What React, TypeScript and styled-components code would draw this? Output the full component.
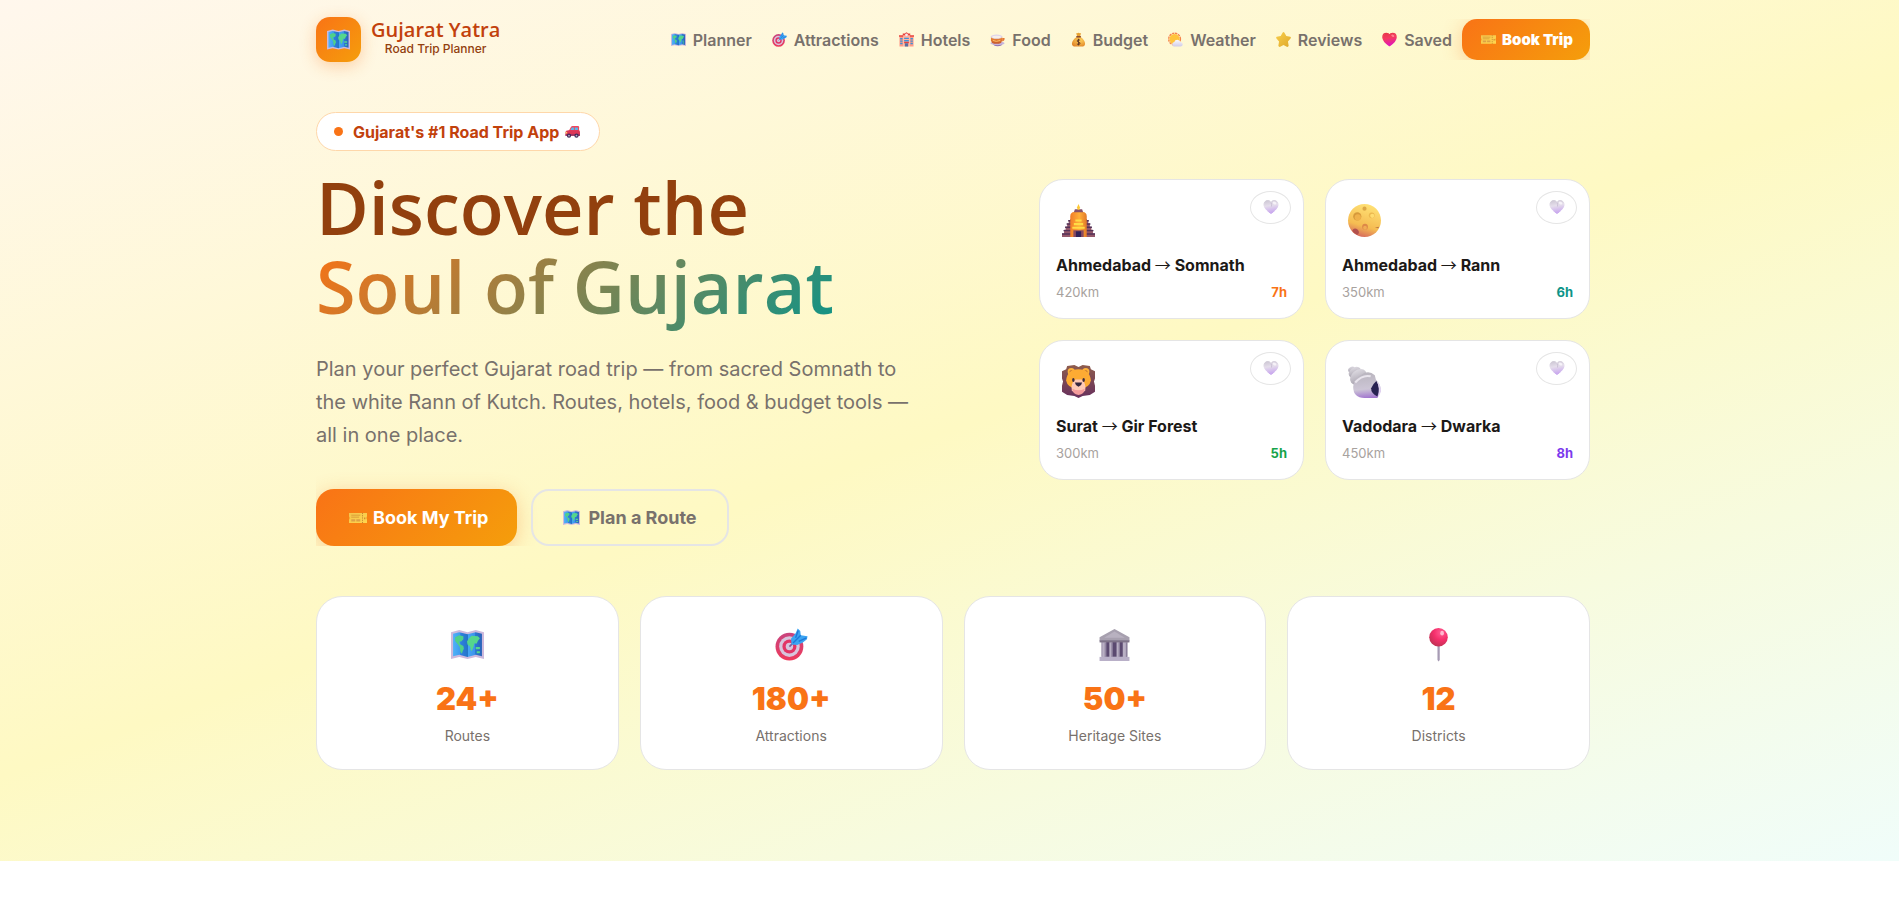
import React, { useId, useState } from "react";
import styled, { createGlobalStyle } from "styled-components";

const sans = `Inter, "Open Sans", "Liberation Sans", sans-serif`;
const display = `"Open Sans", Lato, sans-serif`;

const GlobalStyle = createGlobalStyle`
  *, *::before, *::after { box-sizing: border-box; }
  body { margin: 0; background: #fff; color: #1c1917; font-family: ${sans}; }
  h1, p, dl, dd, dt, ul { margin: 0; padding: 0; }
  button { font-family: inherit; cursor: pointer; }
`;

/* ---------- Icons ---------- */

type IconName =
  | "map" | "target" | "hotel" | "food" | "money" | "weather" | "star" | "heart"
  | "ticket" | "car" | "temple" | "moon" | "lion" | "shell" | "paleHeart" | "museum" | "pin";

const HEART = "M16 29C11 25.500 2 19 2 11C2 6 5.500 3 9.500 3C12.500 3 14.800 4.600 16 7C17.200 4.600 19.500 3 22.500 3C26.500 3 30 6 30 11C30 19 21 25.500 16 29Z";

const drawings: Record<IconName, (id: string) => React.ReactNode> = {
  map: (id) => (
    <>
      <defs>
        <linearGradient id={id} x1="0" x2="1">
          <stop offset="0" stopColor="#4fb3f7" /><stop offset=".25" stopColor="#3f9bf0" />
          <stop offset=".26" stopColor="#2f7fe0" /><stop offset=".5" stopColor="#2476c8" />
          <stop offset=".51" stopColor="#45a6f5" /><stop offset=".75" stopColor="#3c93ea" />
          <stop offset=".76" stopColor="#2b7bd4" /><stop offset="1" stopColor="#2a62b8" />
        </linearGradient>
      </defs>
      <path d="M0 4L8 2L16 4L24 2L32 4V30L24 28L16 30L8 28L0 30Z" fill="#cdb9dc" />
      <path d="M2 5.500L8 4L16 6L24 4L30 5.500V27.500L24 26L16 28L8 26L2 27.500Z" fill={`url(#${id})`} />
      <path d="M4 9L8 7L12 8L12 11L10 13L8 13L8.500 15.500L12 17.500L12.500 20L11.500 22L10.500 25L9 23L8.500 18.500L6 15L4 12.500Z" fill="#4fd089" />
      <path d="M17.500 10L20 7.500L26 8L28 10L26 12.500L25 15L22.500 15L22 18L20.500 21.500L19.500 22.500L18.500 18L16 16L15.500 13Z" fill="#55d68c" />
      <path d="M24 18.500H28V20.500H24ZM25 22.500H28V24.500H25Z" fill="#55d68c" />
    </>
  ),
  target: (id) => (
    <>
      <defs>
        <linearGradient id={id} x1="0" y1="0" x2="0" y2="1">
          <stop offset="0" stopColor="#c8447e" /><stop offset="1" stopColor="#ee3a5c" />
        </linearGradient>
      </defs>
      <circle cx="14" cy="18" r="13.500" fill={`url(#${id})`} />
      <circle cx="14" cy="18" r="10" fill="#d8c5dc" />
      <circle cx="14" cy="18" r="6.800" fill="#e23566" />
      <circle cx="14" cy="18" r="3.600" fill="#d8c5dc" />
      <path d="M14 18L20 12" stroke="#7f5a9d" strokeWidth="1.600" />
      <path d="M15.500 10.500L20 5L22 .5L24.500 3L25 7L31.500 8L31 11L27 14L21.500 16.500L16 16Z" fill="#3ba4f2" />
      <path d="M17.500 14.500L25 7M20 9.500L22.500 2.500M23 13L30.500 9.500" stroke="#1f78d8" strokeWidth="1.300" fill="none" />
    </>
  ),
  hotel: () => (
    <>
      <path d="M1 9H9V31H1ZM23 9H31V31H23Z" fill="#ff9b87" />
      <path d="M9 5H23V31H9Z" fill="#ffb3a0" />
      <path d="M0 7H9V10H0ZM23 7H32V10H23ZM8 3H12L16 .5L20 3H24V7H8Z" fill="#e8413c" />
      <circle cx="16" cy="6" r="3" fill="#f5e6ef" />
      <path d="M2.500 13H7.500V16H2.500ZM2.500 18H7.500V21H2.500ZM2.500 23H7.500V26H2.500ZM24.500 13H29.500V16H24.500ZM24.500 18H29.500V21H24.500ZM24.500 23H29.500V26H24.500ZM11 12H21V15H11ZM11 17H21V20H11Z" fill="#3d93d8" />
      <path d="M11 21H21V24H11Z" fill="#e8413c" />
      <path d="M12.500 24H19.500V31H12.500Z" fill="#57719f" />
    </>
  ),
  food: (id) => (
    <>
      <defs>
        <linearGradient id={id} x1="0" y1="0" x2="0" y2="1">
          <stop offset="0" stopColor="#f59338" /><stop offset="1" stopColor="#c4572c" />
        </linearGradient>
      </defs>
      <path d="M5 24H28L24 29Q16 32 9 29Z" fill="#8a6aae" />
      <ellipse cx="16" cy="24" rx="15" ry="4" fill="#c6b5dc" />
      <path d="M2 10H26V18Q25 24 19 25H9Q3 24 2 18Z" fill={`url(#${id})`} />
      <path d="M26 13H31Q32 19 26 20Z" fill="#e47733" />
      <ellipse cx="14" cy="10" rx="12.500" ry="4.500" fill="#ded3ea" />
      <ellipse cx="14" cy="10.500" rx="9.500" ry="2.600" fill="#f6efe9" />
      <path d="M6 18Q13 22 22 18" stroke="#ffc46b" strokeWidth="2" fill="none" />
    </>
  ),
  money: (id) => (
    <>
      <defs>
        <radialGradient id={id} cx=".6" cy=".35" r=".8">
          <stop offset="0" stopColor="#ffd25c" /><stop offset="1" stopColor="#dd7c22" />
        </radialGradient>
      </defs>
      <path d="M11 2Q13.500 3 16 1.500Q18.500 3 21.500 2L19.500 9H13Z" fill="#e9a233" />
      <path d="M12.500 10Q2 17 2 25Q2 31 9 31H23Q30 31 30 25Q30 17 20 10Z" fill={`url(#${id})`} />
      <rect x="11" y="8.500" width="10.500" height="3" rx="1.500" fill="#8b4c2e" />
      <path d="M19.500 17.500Q16 15.500 13.500 17.500Q12 20.500 16 21.500Q20.500 22.500 19 25.500Q16 28 12.500 25.500M16 14.500V28.500" stroke="#613623" strokeWidth="2" fill="none" />
    </>
  ),
  weather: (id) => (
    <>
      <defs>
        <linearGradient id={id} x1="0" y1="0" x2="0" y2="1">
          <stop offset="0" stopColor="#fafaff" /><stop offset="1" stopColor="#d0cbe8" />
        </linearGradient>
      </defs>
      <circle cx="14" cy="15" r="12.500" fill="none" stroke="#f5834b" strokeWidth="3" strokeDasharray="5 1.500" />
      <circle cx="14" cy="15" r="11" fill="#ffc43d" />
      <path d="M15 31Q9 31 9 26Q9 22 13.500 21.500Q14.500 16.500 20 16.500Q25.500 17 26 21.500Q31.500 22 31.500 26.500Q31 31 26.500 31Z" fill={`url(#${id})`} />
    </>
  ),
  star: (id) => (
    <>
      <defs>
        <linearGradient id={id} x1="0" y1="0" x2="1" y2="1">
          <stop offset="0" stopColor="#f8ce4a" /><stop offset="1" stopColor="#dfa92c" />
        </linearGradient>
      </defs>
      <path d="M14 1.500Q16 -1 18 1.500L22 8.500L30.500 10Q33 11.500 31 14L25.500 20L27 29.500Q26 32.500 23 31.500L16 27.500L9 31.500Q6 32.500 5 29.500L6.500 20L1 14Q-1 11.500 1.500 10L10 8.500Z" fill={`url(#${id})`} />
    </>
  ),
  heart: (id) => (
    <>
      <defs>
        <linearGradient id={id} x1="0" y1="0" x2=".2" y2="1">
          <stop offset="0" stopColor="#e8364a" /><stop offset=".45" stopColor="#f53a60" /><stop offset="1" stopColor="#e318b4" />
        </linearGradient>
      </defs>
      <path d={HEART} fill={`url(#${id})`} stroke={`url(#${id})`} strokeWidth="3" strokeLinejoin="round" />
      <ellipse cx="23" cy="8" rx="3.500" ry="2.200" fill="#ff7e90" transform="rotate(25 23 8)" />
    </>
  ),
  paleHeart: (id) => (
    <>
      <defs>
        <linearGradient id={id} x1="0" y1="0" x2=".2" y2="1">
          <stop offset="0" stopColor="#cbc5d2" /><stop offset=".45" stopColor="#e5deeb" /><stop offset="1" stopColor="#c9a8ee" />
        </linearGradient>
      </defs>
      <path d={HEART} fill={`url(#${id})`} stroke={`url(#${id})`} strokeWidth="2" strokeLinejoin="round" />
      <path d="M16 7Q18 10 17 15" stroke="#c3b8cf" strokeWidth="1.500" fill="none" />
      <ellipse cx="23" cy="8" rx="4" ry="2.600" fill="#f6f2f8" transform="rotate(25 23 8)" />
    </>
  ),
  ticket: (id) => (
    <>
      <defs>
        <linearGradient id={id} x1="0" y1="0" x2="1" y2="1">
          <stop offset="0" stopColor="#f3c44c" /><stop offset="1" stopColor="#ffd64e" />
        </linearGradient>
      </defs>
      <path d="M0 7H32V13Q30 16 32 19V25H0V19Q2 16 0 13Z" fill={`url(#${id})`} />
      <path d="M4 11H20M4 14.500H18" stroke="#d89b38" strokeWidth="1.600" />
      <path d="M4 18H11V22H4ZM13 18H20V22H13Z" fill="#dda147" />
      <path d="M24 7V25" stroke="#b87831" strokeWidth="1.500" strokeDasharray="2 2" />
      <path d="M27 15H29V18H27Z" fill="#c4812e" />
    </>
  ),
  car: () => (
    <>
      <path d="M9 13L13 6Q14 4.500 16 4.500H28Q30 4.500 30 7V15H8Z" fill="#f0475e" />
      <path d="M11.500 13L14.500 7.500H19V13ZM21 7.500H27.500V13H21Z" fill="#58b8ee" />
      <path d="M1 18Q1 13.500 8 13.500H30Q32 14 32 18V25H1Z" fill="#dc3557" />
      <path d="M1 22H32V25H1Z" fill="#8f2f62" />
      <circle cx="3" cy="18.500" r="1.800" fill="#ffd067" />
      <circle cx="8.500" cy="25" r="4.500" fill="#3d2856" /><circle cx="24.500" cy="25" r="4.500" fill="#3d2856" />
      <circle cx="8.500" cy="25" r="1.900" fill="#bba8cf" /><circle cx="24.500" cy="25" r="1.900" fill="#bba8cf" />
    </>
  ),
  temple: (id) => (
    <>
      <defs>
        <linearGradient id={id} x1="0" x2="1">
          <stop offset="0" stopColor="#f07c28" /><stop offset=".55" stopColor="#ffae38" /><stop offset="1" stopColor="#e27a29" />
        </linearGradient>
      </defs>
      <path d="M0 28.500H2V25H3.500V22H5V19H6.500V16H8V14.500H24V16H25.500V19H27V22H28.500V25H30V28.500H32V32H0Z" fill="#93576a" />
      <path d="M0 29H9M1.500 25.800H9M3 22.600H9M4.500 19.400H9M6 16.200H9M23 16.200H26M23 19.400H27.500M23 22.600H29M23 25.800H30.500M23 29H32" stroke="#533258" strokeWidth="1.400" />
      <path d="M8 32V12Q8 8 12 7.500H20Q24 8 24 12V32Z" fill={`url(#${id})`} />
      <path d="M12.500 5H19.500L20.500 8H11.500Z" fill="#86506a" />
      <path d="M16 0L17.500 3.500L16.800 5.500H15.200L14.500 3.500Z" fill="#ffc833" />
      <path d="M13 15H19V17H13ZM11.500 18.500H20.500V20.500H11.500ZM10 22H22V24H10Z" fill="#ffdc45" />
      <path d="M11 25.500H21V32H11Z" fill="#8a4b60" />
      <path d="M13.500 26.500H18.500V32H13.500Z" fill="#33235a" />
    </>
  ),
  moon: (id) => (
    <>
      <defs>
        <linearGradient id={id} x1=".6" y1="0" x2=".3" y2="1">
          <stop offset="0" stopColor="#ffe175" /><stop offset=".65" stopColor="#f5bc52" /><stop offset="1" stopColor="#d4635e" />
        </linearGradient>
      </defs>
      <circle cx="16" cy="16" r="16" fill={`url(#${id})`} />
      <circle cx="9" cy="12" r="4" fill="#d6993b" /><circle cx="9.500" cy="13" r="3" fill="#efb14b" />
      <circle cx="23" cy="11" r="2.800" fill="#ecb84e" /><circle cx="23.500" cy="11.500" r="2" fill="#ffdc70" />
      <circle cx="16" cy="4.500" r="2" fill="#dca746" />
      <circle cx="16.500" cy="22" r="2.800" fill="#dd8848" /><circle cx="16.500" cy="23" r="1.800" fill="#f1ad55" />
      <path d="M4 26Q6 22 9.500 25Q12 28 9 30Q6 29 4 26Z" fill="#b2504d" />
      <path d="M26 23L30 22L29.500 23.500Z" fill="#bb713d" />
    </>
  ),
  lion: (id) => (
    <>
      <defs>
        <linearGradient id={id} x1="0" y1="0" x2="0" y2="1">
          <stop offset="0" stopColor="#8e5c4d" /><stop offset="1" stopColor="#67305d" />
        </linearGradient>
      </defs>
      <path d="M5 1L12 0L16 2L20 0L27 1L28 4L32 6V13L31 16L32 20V26L27 29L20 30L16 32L12 30L5 29L0 26V20L1 16L0 13V6L4 4Z" fill={`url(#${id})`} />
      <circle cx="9" cy="6.500" r="3.500" fill="#ffb43a" /><circle cx="23" cy="6.500" r="3.500" fill="#ffb43a" />
      <circle cx="9" cy="6.800" r="1.800" fill="#b4662f" /><circle cx="23" cy="6.800" r="1.800" fill="#b4662f" />
      <path d="M4 15Q5 4 16 4Q27 4 28 15Q27 22 16 24Q5 22 4 15Z" fill="#fdab33" />
      <path d="M13 14H19Q24 18 22.500 25Q16 30 9.500 25Q8 18 13 14Z" fill="#ffc9b5" />
      <path d="M10 23Q16 26 22 23Q22 28 16 29Q10 28 10 23Z" fill="#f49b9b" />
      <path d="M12.500 17H19.500L18.500 19.500L16 21L13.500 19.500Z" fill="#34263f" />
      <ellipse cx="11" cy="14.500" rx="1.200" ry="2" fill="#3c2a3e" /><ellipse cx="21" cy="14.500" rx="1.200" ry="2" fill="#3c2a3e" />
    </>
  ),
  shell: (id) => (
    <>
      <defs>
        <linearGradient id={id} x1=".4" y1="0" x2=".5" y2="1">
          <stop offset="0" stopColor="#b9b5be" /><stop offset=".65" stopColor="#cdc6d6" /><stop offset="1" stopColor="#a277cf" />
        </linearGradient>
        <linearGradient id={`${id}w`} x1=".7" y1="0" x2=".2" y2="1">
          <stop offset="0" stopColor="#dedbe2" /><stop offset="1" stopColor="#a29da9" />
        </linearGradient>
      </defs>
      <ellipse cx="3.500" cy="4.500" rx="3.500" ry="2.800" fill={`url(#${id}w)`} transform="rotate(-30 3.500 4.500)" />
      <ellipse cx="6.500" cy="7" rx="6.500" ry="4.500" fill={`url(#${id}w)`} transform="rotate(-35 6.500 7)" />
      <ellipse cx="10" cy="11.500" rx="9" ry="6.500" fill={`url(#${id}w)`} transform="rotate(-40 10 11.500)" />
      <path d="M5 21Q6 13 13 9.500Q20 4.500 26 10L27 14Q32 19 32 25L28.500 32H16Q5 31.500 5 21Z" fill={`url(#${id})`} />
      <path d="M7 17Q14 9 22 11" stroke="#e9e5ed" strokeWidth="2" fill="none" />
      <path d="M27.500 15.500Q32 22 28.500 30.500Q22 27 22.500 22.500Q24 18.500 27.500 15.500Z" fill="#282252" />
      <path d="M28 16Q31.500 23 29 30.500Q31.500 29 32 24Q31 18 28 16Z" fill="#e3d6f2" />
    </>
  ),
  museum: () => (
    <>
      <path d="M16 1L30.500 9V12.500H1.500V9Z" fill="#a7a0af" />
      <path d="M16 3.500L26 9.500H6Z" fill="#b8b1c0" />
      <path d="M3.500 12.500H28.500V28H3.500Z" fill="#5b4a70" />
      <path d="M4 12.500H8V28H4ZM11 12.500H14V28H11ZM18 12.500H21V28H18ZM24 12.500H28V28H24Z" fill="#b9b0c4" />
      <path d="M7 14V28M13.500 14V28M20.500 14V28M27.500 14V28" stroke="#877b98" />
      <path d="M1.500 28H30.500V32H1.500Z" fill="#b9b0c8" />
      <path d="M1.500 12H30.500V14H1.500Z" fill="#7e7388" />
    </>
  ),
  pin: (id) => (
    <>
      <defs>
        <radialGradient id={id} cx=".65" cy=".25" r=".8">
          <stop offset="0" stopColor="#ff5d93" /><stop offset=".5" stopColor="#f52f6b" /><stop offset="1" stopColor="#bd3152" />
        </radialGradient>
      </defs>
      <path d="M15 17H17.200V31L16 32.500L15 31Z" fill="#a79bb4" />
      <circle cx="16" cy="9" r="9" fill={`url(#${id})`} />
      <ellipse cx="19.500" cy="5" rx="1.800" ry="2.300" fill="#ffb8cf" />
    </>
  ),
};

const Svg = styled.svg<{ $size: number }>`
  display: block;
  flex: none;
  width: ${(p) => p.$size}px;
  height: ${(p) => p.$size}px;
  overflow: visible;
`;

function Icon({ name, size }: { name: IconName; size: number }) {
  const id = useId();
  return <Svg $size={size} viewBox="0 0 32 32" aria-hidden="true">{drawings[name](id)}</Svg>;
}

/* ---------- Layout ---------- */

const Page = styled.div`
  padding: 17px 24px 91px 31px;
  background: linear-gradient(160deg, #fff7ed 0%, #fef9c3 50%, #f0fdfa 100%);
`;

const Container = styled.div`
  max-width: 1274px;
  margin: 0 auto;
`;

const Header = styled.header`
  display: flex;
  align-items: center;
  justify-content: space-between;
`;

const Brand = styled.a`
  display: flex;
  align-items: center;
  gap: 10px;
  text-decoration: none;
`;

const BrandMark = styled.span`
  display: grid;
  place-items: center;
  width: 45px;
  height: 45px;
  border-radius: 14px;
  background: linear-gradient(135deg, #f97316, #f59e0b);
  box-shadow: 0 4px 16px rgba(249, 115, 22, 0.3);
`;

const BrandText = styled.span`
  display: flex;
  flex-direction: column;
  align-items: center;
  padding-bottom: 3px;
`;

const BrandName = styled.span`
  font: 600 20px/22px ${display};
  color: #c2410c;
`;

const BrandTagline = styled.span`
  font-size: 12px;
  line-height: 16px;
  font-weight: 500;
  color: #92400e;
`;

const Nav = styled.nav`
  display: flex;
  align-items: center;
  gap: 10px;
  padding-left: 20px;
  overflow: hidden;
`;

const NavList = styled.ul`
  display: flex;
  gap: 20px;
  list-style: none;
`;

const NavLink = styled.a`
  display: flex;
  align-items: center;
  gap: 7px;
  font-size: 16px;
  line-height: 24px;
  font-weight: 600;
  color: #78716c;
  text-decoration: none;
`;

const PrimaryButton = styled.button<{ $large?: boolean }>`
  display: flex;
  align-items: center;
  justify-content: center;
  gap: 6px;
  height: ${(p) => (p.$large ? 57 : 41)}px;
  padding: 0 ${(p) => (p.$large ? 29 : 17)}px 0 ${(p) => (p.$large ? 33 : 19)}px;
  border: 0;
  border-radius: ${(p) => (p.$large ? 18 : 15)}px;
  background: linear-gradient(135deg, #f97316, #f59e0b);
  box-shadow: 0 4px 20px rgba(249, 115, 22, 0.3);
  color: #fff;
  font-size: ${(p) => (p.$large ? 18 : 15)}px;
  font-weight: ${(p) => (p.$large ? 700 : 900)};
`;

const OutlineButton = styled.button`
  display: flex;
  align-items: center;
  gap: 8px;
  height: 57px;
  padding: 0 30px;
  border: 2px solid #e5e5e5;
  border-radius: 18px;
  background: transparent;
  color: #78716c;
  font-size: 18px;
  font-weight: 700;
`;

const Hero = styled.section`
  display: grid;
  grid-template-columns: minmax(0, 1fr) 551px;
  align-items: center;
  gap: 64px;
  margin-top: 50px;
  @media (max-width: 1150px) {
    grid-template-columns: minmax(0, 1fr);
  }
`;

const Badge = styled.div`
  display: inline-flex;
  align-items: center;
  gap: 10px;
  height: 39px;
  padding: 0 19px 0 17px;
  border: 1px solid #fed7aa;
  border-radius: 20px;
  background: #fff;
  color: #c2410c;
  font-size: 16px;
  font-weight: 700;
`;

const BadgeText = styled.span`
  display: flex;
  align-items: center;
  gap: 6px;
`;

const Dot = styled.span`
  width: 9px;
  height: 9px;
  border-radius: 50%;
  background: #f97316;
`;

const Title = styled.h1`
  margin-top: 17px;
  font: 600 72px/79px ${display};
  color: #92400e;
`;

const TitleAccent = styled.span`
  display: block;
  width: fit-content;
  padding-bottom: 8px;
  background: linear-gradient(135deg, #f97316, #0d9488);
  background-clip: text;
  -webkit-background-clip: text;
  color: transparent;
`;

const Lead = styled.p`
  max-width: 595px;
  margin-top: 19px;
  font-size: 20px;
  line-height: 33px;
  color: #78716c;
`;

const Actions = styled.div`
  display: flex;
  gap: 14px;
  margin-top: 15px;
  padding-top: 22px;
  overflow: hidden;
`;

const RouteGrid = styled.div`
  display: grid;
  grid-template-columns: repeat(2, minmax(0, 1fr));
  gap: 21px;
`;

const RouteCard = styled.article`
  position: relative;
  padding: 24px 16px 16px;
  border: 1px solid #e5e5e5;
  border-radius: 24px;
  background: #fff;
`;

const RouteIcon = styled.div`
  padding-left: 6px;
`;

const RouteName = styled.div`
  margin-top: 17px;
  font-size: 16px;
  line-height: 22px;
  font-weight: 700;
  white-space: nowrap;
`;

const Arrow = styled.span`
  font-family: "Noto Sans CJK JP", sans-serif;
  font-weight: 400;
  line-height: 16px;
`;

const RouteMeta = styled.div`
  display: flex;
  justify-content: space-between;
  margin-top: 6px;
  font-size: 13px;
  line-height: 20px;
  color: #a8a29e;
`;

const Duration = styled.span<{ $color: string }>`
  font-weight: 700;
  color: ${(p) => p.$color};
`;

const SaveButton = styled.button`
  position: absolute;
  top: 11px;
  right: 12px;
  display: grid;
  place-items: center;
  width: 41px;
  height: 33px;
  padding: 0;
  border: 1px solid #e5e5e5;
  border-radius: 50%;
  background: #fff;
`;

const StatGrid = styled.dl`
  display: grid;
  grid-template-columns: repeat(4, minmax(0, 1fr));
  gap: 21px;
  margin-top: 50px;
`;

const StatCard = styled.div`
  display: flex;
  flex-direction: column;
  align-items: center;
  padding: 31px 16px 22px;
  border: 1px solid #e5e5e5;
  border-radius: 26px;
  background: #fff;
`;

const StatValue = styled.dd`
  margin-top: 14px;
  font-size: 31px;
  line-height: 48px;
  font-weight: 900;
  color: #f97316;
`;

const StatLabel = styled.dt`
  order: 3;
  margin-top: 2px;
  font-size: 14px;
  line-height: 22px;
  color: #78716c;
`;

/* ---------- Content ---------- */

const links: { icon: IconName; label: string }[] = [
  { icon: "map", label: "Planner" },
  { icon: "target", label: "Attractions" },
  { icon: "hotel", label: "Hotels" },
  { icon: "food", label: "Food" },
  { icon: "money", label: "Budget" },
  { icon: "weather", label: "Weather" },
  { icon: "star", label: "Reviews" },
  { icon: "heart", label: "Saved" },
];

const routes: { icon: IconName; from: string; to: string; km: string; time: string; color: string }[] = [
  { icon: "temple", from: "Ahmedabad", to: "Somnath", km: "420km", time: "7h", color: "#f97316" },
  { icon: "moon", from: "Ahmedabad", to: "Rann", km: "350km", time: "6h", color: "#0d9488" },
  { icon: "lion", from: "Surat", to: "Gir Forest", km: "300km", time: "5h", color: "#16a34a" },
  { icon: "shell", from: "Vadodara", to: "Dwarka", km: "450km", time: "8h", color: "#7c3aed" },
];

const stats: { icon: IconName; value: string; label: string }[] = [
  { icon: "map", value: "24+", label: "Routes" },
  { icon: "target", value: "180+", label: "Attractions" },
  { icon: "museum", value: "50+", label: "Heritage Sites" },
  { icon: "pin", value: "12", label: "Districts" },
];

function Route({ icon, from, to, km, time, color }: (typeof routes)[number]) {
  const [saved, setSaved] = useState(false);
  return (
    <RouteCard>
      <SaveButton aria-label={`Save ${from} to ${to}`} aria-pressed={saved} onClick={() => setSaved(!saved)}>
        <Icon name={saved ? "heart" : "paleHeart"} size={16} />
      </SaveButton>
      <RouteIcon><Icon name={icon} size={33} /></RouteIcon>
      <RouteName>{from} <Arrow>→</Arrow> {to}</RouteName>
      <RouteMeta>
        <span>{km}</span>
        <Duration $color={color}>{time}</Duration>
      </RouteMeta>
    </RouteCard>
  );
}

export default function App() {
  return (
    <>
      <GlobalStyle />
      <Page>
        <Container>
          <Header>
            <Brand href="#home">
              <BrandMark><Icon name="map" size={23} /></BrandMark>
              <BrandText>
                <BrandName>Gujarat Yatra</BrandName>
                <BrandTagline>Road Trip Planner</BrandTagline>
              </BrandText>
            </Brand>
            <Nav aria-label="Main">
              <NavList>
                {links.map((l) => (
                  <li key={l.label}>
                    <NavLink href={`#${l.label.toLowerCase()}`}>
                      <Icon name={l.icon} size={15} />{l.label}
                    </NavLink>
                  </li>
                ))}
              </NavList>
              <PrimaryButton><Icon name="ticket" size={15} />Book Trip</PrimaryButton>
            </Nav>
          </Header>
          <main>
            <Hero>
              <div>
                <Badge>
                  <Dot />
                  <BadgeText>Gujarat's #1 Road Trip App <Icon name="car" size={15} /></BadgeText>
                </Badge>
                <Title>
                  Discover the
                  <TitleAccent>Soul of Gujarat</TitleAccent>
                </Title>
                <Lead>
                  Plan your perfect Gujarat road trip — from sacred Somnath to the white Rann of Kutch.
                  Routes, hotels, food &amp; budget tools — all in one place.
                </Lead>
                <Actions>
                  <PrimaryButton $large><Icon name="ticket" size={18} />Book My Trip</PrimaryButton>
                  <OutlineButton><Icon name="map" size={17} />Plan a Route</OutlineButton>
                </Actions>
              </div>
              <RouteGrid>
                {routes.map((r) => <Route key={r.to} {...r} />)}
              </RouteGrid>
            </Hero>
            <StatGrid>
              {stats.map((s) => (
                <StatCard key={s.label}>
                  <Icon name={s.icon} size={33} />
                  <StatLabel>{s.label}</StatLabel>
                  <StatValue>{s.value}</StatValue>
                </StatCard>
              ))}
            </StatGrid>
          </main>
        </Container>
      </Page>
    </>
  );
}
